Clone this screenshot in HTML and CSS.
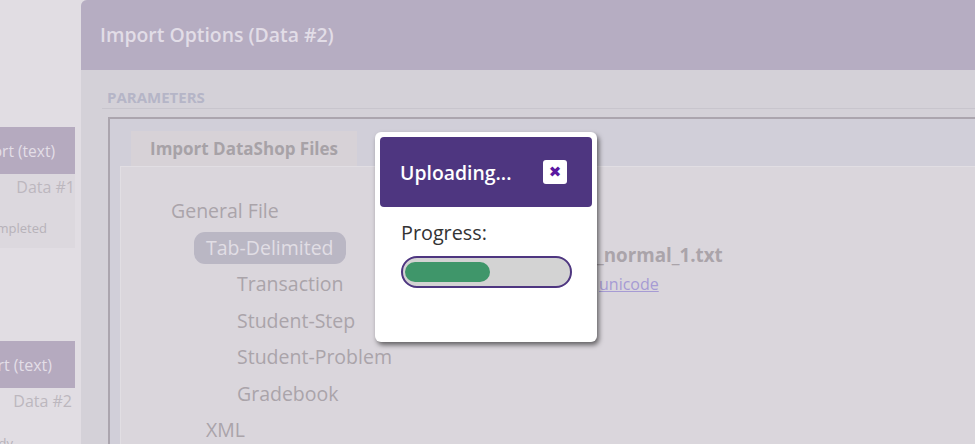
FILE: index.html
```html
<!DOCTYPE html>
<html lang="en">
<head>
<meta charset="utf-8">
<title>Import Options</title>
<link rel="stylesheet" href="styles.css">
</head>
<body>
<div class="layout">
  <aside class="sidebar">
    <div class="card">
      <div class="card-head"><span>Import (text)</span></div>
      <div class="card-body">
        <div class="card-name"><span>Data #1</span></div>
        <div class="card-status"><span>Completed</span></div>
      </div>
    </div>
    <div class="card card-second">
      <div class="card-head card-head-2"><span>Import (text)</span></div>
      <div class="card-body">
        <div class="card-name card-name-2"><span>Data #2</span></div>
        <div class="card-status card-status-2"><span>Ready</span></div>
      </div>
    </div>
  </aside>

  <main class="main">
    <header class="main-header">
      <h1 class="main-title">Import Options (Data #2)</h1>
    </header>
    <section class="main-body">
      <div class="params">
        <h2 class="params-title">PARAMETERS</h2>
        <div class="params-box">
          <div class="tabs">
            <div class="tab">Import DataShop Files</div>
          </div>
          <div class="tab-panel">
            <div class="tree-col">
              <ul class="tree">
                <li><div class="row"><span class="label">General File</span></div>
                  <ul class="tree lvl2">
                    <li><div class="row"><span class="label selected">Tab-Delimited</span></div>
                      <ul class="tree lvl3">
                        <li><div class="row"><span class="label">Transaction</span></div></li>
                        <li><div class="row"><span class="label">Student-Step</span></div></li>
                        <li><div class="row"><span class="label">Student-Problem</span></div></li>
                        <li><div class="row"><span class="label">Gradebook</span></div></li>
                      </ul>
                    </li>
                    <li><div class="row"><span class="label">XML</span></div></li>
                  </ul>
                </li>
              </ul>
            </div>
            <div class="info-col">
              <div class="file-name">_normal_1.txt</div>
              <a class="file-link" href="#">unicode</a>
            </div>
          </div>
        </div>
      </div>
    </section>
  </main>
</div>

<div class="modal" role="dialog" aria-label="Uploading">
  <div class="modal-head">
    <span class="modal-title">Uploading...</span>
    <button class="modal-close" type="button" aria-label="Close">&#x2716;</button>
  </div>
  <div class="modal-body">
    <div class="progress-label">Progress:</div>
    <div class="progress">
      <div class="progress-fill" style="width: 52%"></div>
    </div>
  </div>
</div>
</body>
</html>
```

FILE: styles.css
```css
* { box-sizing: border-box; }

html, body {
  margin: 0;
  padding: 0;
}

body {
  width: 975px;
  height: 444px;
  overflow: hidden;
  background: #e1dde3;
  font-family: "Open Sans", "DejaVu Sans", sans-serif;
  position: relative;
}

.layout {
  display: flex;
  height: 444px;
}

/* ---------- sidebar ---------- */
.sidebar {
  flex: 0 0 75px;
  width: 75px;
  overflow: hidden;
  padding-top: 127px;
}

.card-head,
.card-name,
.card-status {
  display: flex;
  justify-content: flex-end;
  white-space: nowrap;
  overflow: hidden;
}

.card-head {
  height: 47px;
  align-items: center;
  background: #b5aabf;
  color: #e3dee7;
  font-size: 15.5px;
  padding-right: 20px;
}

.card-head-2 { padding-right: 23px; font-size: 16px; }

.card-body {
  background: #dcd8de;
  height: 74px;
  padding-top: 1px;
}

.card-name {
  color: #bcb7be;
  font-size: 16px;
  line-height: 24px;
}

.card-name-2 { padding-right: 3px; }

.card-status {
  color: #b7b2b9;
  font-size: 13px;
  line-height: 18px;
  margin-top: 20px;
  padding-right: 28px;
}

.card-second {
  margin-top: 93px;
}

.card-second .card-body {
  background: transparent;
}

.card-status-2 { margin-top: 21px; padding-right: 62px; }

/* ---------- main panel ---------- */
.main {
  flex: 1 1 auto;
  margin-left: 6px;
  background: #d4d1d8;
  border-radius: 6px 0 0 0;
  overflow: hidden;
  display: flex;
  flex-direction: column;
}

.main-header {
  flex: 0 0 70px;
  height: 70px;
  background: #b6adc2;
  display: flex;
  align-items: center;
  padding-left: 19px;
}

.main-title {
  margin: 0;
  font-size: 19.4px;
  font-weight: 600;
  color: #e2dde7;
  padding-bottom: 1px;
}

.main-body {
  flex: 1 1 auto;
  padding: 16px 0 0 21px;
}

.params-title {
  margin: 0;
  padding-left: 5px;
  font-size: 15px;
  font-weight: 700;
  line-height: 22px;
  color: #b5b5c7;
  border-bottom: 1px solid #c8c5cd;
}

.params-box {
  margin: 8px 0 0 6px;
  border: 2px solid #aba5ae;
  border-right: none;
  border-bottom: none;
  background: #d1cfd9;
  padding: 12px 0 0 10px;
  height: 400px;
}

.tabs {
  display: flex;
  padding-left: 11px;
}

.tab {
  height: 35px;
  line-height: 35px;
  padding: 0 19px;
  background: #d7d2d7;
  color: #a7a2a7;
  font-size: 17px;
  font-weight: 700;
}

.tab-panel {
  background: #dad6dc;
  border-top: 1px solid #e1dee3;
  border-left: 1px solid #e1dee3;
  display: grid;
  grid-template-columns: 476px 1fr;
  height: 320px;
}

.tree-col {
  padding: 26px 0 0 38px;
}

.tree {
  list-style: none;
  margin: 0;
  padding: 0;
}

.lvl2 { padding-left: 35px; }
.lvl3 { padding-left: 31px; }

.row {
  height: 36.5px;
  display: flex;
  align-items: center;
}

.label {
  font-size: 19.5px;
  line-height: 32px;
  padding: 0 12px;
  color: #aaa4aa;
  border-radius: 11px;
  white-space: nowrap;
}

.label.selected {
  background: #bab7c4;
  color: #e1dee5;
}

.info-col {
  padding-top: 76px;
  margin-left: -1px;
}

.file-name {
  font-size: 18.8px;
  font-weight: 700;
  line-height: 24px;
  color: #aaa4aa;
  white-space: nowrap;
}

.file-link {
  display: block;
  margin-top: 5px;
  margin-left: 3px;
  font-size: 16px;
  line-height: 24px;
  color: #a69bd4;
  text-decoration: underline;
}

/* ---------- modal ---------- */
.modal {
  position: absolute;
  left: 375px;
  top: 132px;
  width: 222px;
  height: 210px;
  background: #ffffff;
  border-radius: 6px;
  padding: 5px;
  box-shadow: 2px 3px 5px rgba(0, 0, 0, 0.55);
}

.modal-head {
  height: 70px;
  background: #4e3680;
  border-radius: 4px;
  display: flex;
  align-items: center;
  justify-content: space-between;
  padding: 0 25px 0 20px;
}

.modal-title {
  color: #ffffff;
  font-size: 19.4px;
  font-weight: 600;
}

.modal-close {
  width: 24px;
  height: 24px;
  border: none;
  border-radius: 3px;
  background: #ffffff;
  color: #5a18a0;
  font-family: "DejaVu Sans", sans-serif;
  font-size: 15px;
  line-height: 24px;
  padding: 0;
  text-align: center;
}

.modal-body {
  padding: 14px 0 0 21px;
}

.progress-label {
  font-size: 19.8px;
  line-height: 24px;
  color: #333333;
}

.progress {
  margin-top: 11px;
  width: 171px;
  height: 32px;
  border: 2px solid #4e3680;
  border-radius: 16px;
  background: #d3d3d3;
  padding: 4px 2px;
}

.progress-fill {
  height: 20px;
  background: #3f966a;
  border-radius: 10px;
}
```
